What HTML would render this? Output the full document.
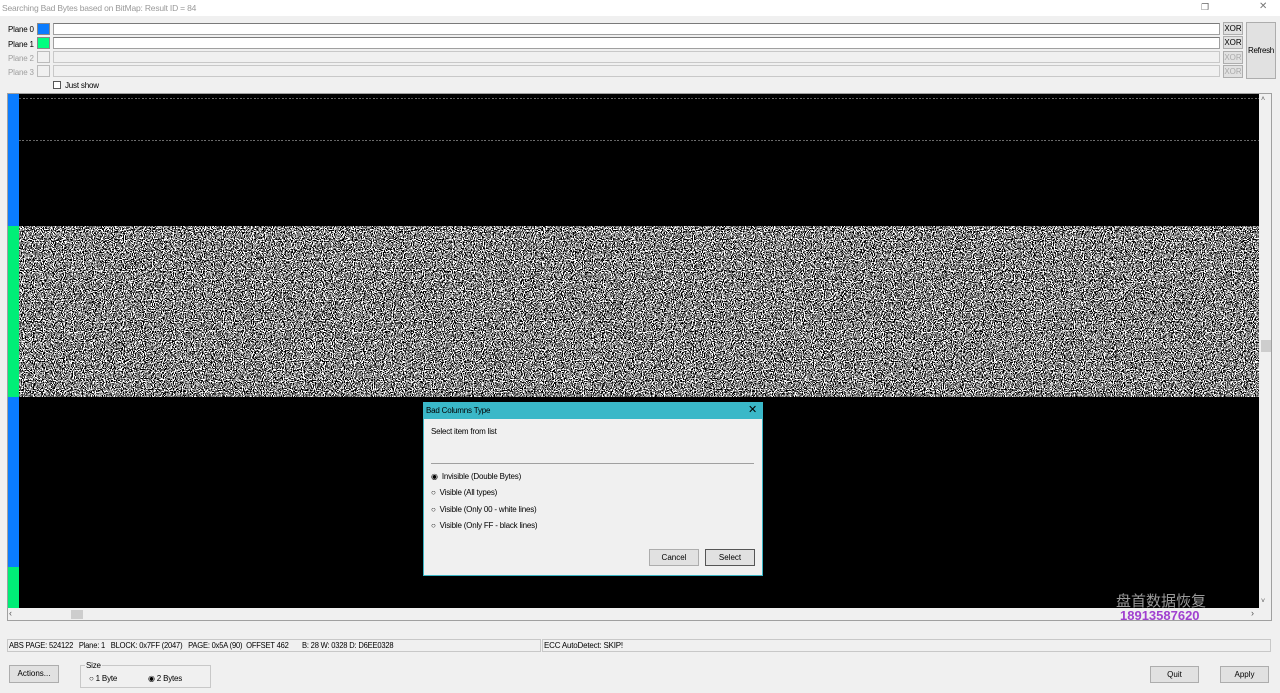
<!DOCTYPE html>
<html><head><meta charset="utf-8"><style>
*{box-sizing:border-box;margin:0;padding:0}
body{width:1280px;height:693px;background:#f0f0f0;font-family:"Liberation Sans",sans-serif;font-size:8px;color:#000;position:relative;overflow:hidden}
.a{position:absolute}
.lbl{font-size:8px;letter-spacing:-0.2px}
.in{background:#fff;border:1px solid #a0a0a0;border-top-color:#7a7a7a}
.dis{background:#f0f0f0;border:1px solid #c8c8c8}
.btn{background:#e1e1e1;border:1px solid #adadad;text-align:center;font-size:8px}
.xor{background:#e1e1e1;border:1px solid #adadad;font-size:8px;text-align:center;line-height:11px}
</style></head><body>
<div class="a" style="left:0;top:0;width:1280px;height:16px;background:#fff"></div>
<div class="a" style="left:2px;top:3px;color:#9a9a9a;font-size:8.5px;letter-spacing:-0.2px">Searching Bad Bytes based on BitMap: Result ID = 84</div>
<div class="a" style="left:1201px;top:2px;color:#666;font-size:9px">❐</div>
<div class="a" style="left:1259px;top:1px;color:#777;font-size:10px">✕</div>

<div class="a lbl" style="left:8px;top:25px">Plane 0</div>
<div class="a lbl" style="left:8px;top:40px">Plane 1</div>
<div class="a lbl" style="left:8px;top:54px;color:#a0a0a0">Plane 2</div>
<div class="a lbl" style="left:8px;top:68px;color:#a0a0a0">Plane 3</div>
<div class="a" style="left:37px;top:23px;width:13px;height:12px;background:#0a7cff;border:1px solid #888"></div>
<div class="a" style="left:37px;top:37px;width:13px;height:12px;background:#00ff7f;border:1px solid #888"></div>
<div class="a" style="left:37px;top:51px;width:13px;height:12px;border:1px solid #bbb"></div>
<div class="a" style="left:37px;top:65px;width:13px;height:12px;border:1px solid #bbb"></div>
<div class="a in" style="left:53px;top:23px;width:1167px;height:12px"></div>
<div class="a in" style="left:53px;top:37px;width:1167px;height:12px"></div>
<div class="a dis" style="left:53px;top:51px;width:1167px;height:12px"></div>
<div class="a dis" style="left:53px;top:65px;width:1167px;height:12px"></div>
<div class="a xor" style="left:1223px;top:22px;width:20px;height:13px">XOR</div>
<div class="a xor" style="left:1223px;top:36px;width:20px;height:13px">XOR</div>
<div class="a xor" style="left:1223px;top:51px;width:20px;height:13px;color:#aaa">XOR</div>
<div class="a xor" style="left:1223px;top:65px;width:20px;height:13px;color:#aaa">XOR</div>
<div class="a btn" style="left:1246px;top:22px;width:30px;height:57px;line-height:55px;letter-spacing:-0.3px">Refresh</div>
<div class="a" style="left:53px;top:81px;width:8px;height:8px;background:#fff;border:1px solid #555"></div>
<div class="a lbl" style="left:65px;top:81px">Just show</div>

<div class="a" style="left:7px;top:93px;width:1265px;height:528px;border:1px solid #a0a0a0;background:#f0f0f0"></div>
<div class="a" style="left:8px;top:94px;width:11px;height:132px;background:#0a7cff"></div>
<div class="a" style="left:8px;top:226px;width:11px;height:171px;background:#00ee77"></div>
<div class="a" style="left:8px;top:397px;width:11px;height:170px;background:#0a7cff"></div>
<div class="a" style="left:8px;top:567px;width:11px;height:41px;background:#00ee77"></div>
<div class="a" style="left:19px;top:94px;width:1240px;height:514px;background:#000"></div>
<div class="a" style="left:19px;top:98px;width:1240px;height:1px;opacity:.6;background:repeating-linear-gradient(90deg,#888 0 2px,#000 2px 4px,#bbb 4px 6px,#000 6px 7px)"></div>
<div class="a" style="left:19px;top:140px;width:1240px;height:1px;opacity:.6;background:repeating-linear-gradient(90deg,#999 0 2px,#000 2px 3px,#bbb 3px 5px,#000 5px 7px)"></div>
<svg class="a" style="left:19px;top:226px" width="1240" height="171">
<filter id="n" x="0" y="0" width="100%" height="100%"><feTurbulence type="fractalNoise" baseFrequency="0.9" numOctaves="1" seed="3"/><feColorMatrix type="matrix" values="0 0 0 0 0  0 0 0 0 0  0 0 0 0 0  1 0 0 0 0"/><feComponentTransfer><feFuncA type="discrete" tableValues="0 1"/></feComponentTransfer><feColorMatrix type="matrix" values="0 0 0 0 1  0 0 0 0 1  0 0 0 0 1  0 0 0 1 0"/></filter>
<rect width="1240" height="171" fill="#000"/><rect width="1240" height="171" filter="url(#n)"/></svg>
<div class="a" style="left:1259px;top:94px;width:12px;height:514px;background:#f0f0f0"></div>
<div class="a" style="left:1261px;top:96px;font-size:7px;color:#555">˄</div>
<div class="a" style="left:1261px;top:340px;width:10px;height:12px;background:#cdcdcd"></div>
<div class="a" style="left:1261px;top:598px;font-size:7px;color:#555">˅</div>
<div class="a" style="left:9px;top:608px;font-size:9px;color:#555">‹</div>
<div class="a" style="left:71px;top:610px;width:12px;height:9px;background:#cdcdcd"></div>
<div class="a" style="left:1251px;top:608px;font-size:9px;color:#555">›</div>
<div class="a" style="left:1116px;top:590px;font-size:15px;color:#9a9a9a;font-family:'Liberation Sans','Noto Sans CJK SC',sans-serif">盘首数据恢复</div>
<div class="a" style="left:1120px;top:608px;font-size:13px;font-weight:bold;color:#a040d0">18913587620</div>

<!-- dialog -->
<div class="a" style="left:423px;top:402px;width:340px;height:174px;background:#f0f0f0;border:1px solid #3ab4c4"></div>
<div class="a" style="left:423px;top:402px;width:340px;height:17px;background:#3ab8c8"></div>
<div class="a lbl" style="left:426px;top:406px">Bad Columns Type</div>
<div class="a" style="left:748px;top:403px;font-size:11px">✕</div>
<div class="a lbl" style="left:431px;top:427px">Select item from list</div>
<div class="a" style="left:431px;top:463px;width:323px;height:1px;background:#a0a0a0"></div>
<div class="a lbl" style="left:431px;top:472px">◉&nbsp; Invisible (Double Bytes)</div>
<div class="a lbl" style="left:431px;top:488px">○&nbsp; Visible (All types)</div>
<div class="a lbl" style="left:431px;top:505px">○&nbsp; Visible (Only 00 - white lines)</div>
<div class="a lbl" style="left:431px;top:521px">○&nbsp; Visible (Only FF - black lines)</div>
<div class="a btn" style="left:649px;top:549px;width:50px;height:17px;line-height:15px">Cancel</div>
<div class="a btn" style="left:705px;top:549px;width:50px;height:17px;line-height:15px;border-color:#555">Select</div>

<!-- status -->
<div class="a" style="left:7px;top:639px;width:534px;height:13px;border:1px solid #c8c8c8"></div>
<div class="a lbl" style="left:9px;top:641px;white-space:nowrap;transform:scaleX(0.945);transform-origin:0 0">ABS PAGE: 524122 &nbsp; Plane: 1 &nbsp; BLOCK: 0x7FF (2047) &nbsp; PAGE: 0x5A (90) &nbsp;OFFSET 462 &nbsp; &nbsp; &nbsp; B: 28 W: 0328 D: D6EE0328</div>
<div class="a" style="left:542px;top:639px;width:729px;height:13px;border:1px solid #c8c8c8"></div>
<div class="a lbl" style="left:544px;top:641px">ECC AutoDetect: SKIP!</div>
<div class="a btn" style="left:9px;top:665px;width:50px;height:18px;line-height:16px">Actions...</div>
<div class="a" style="left:80px;top:665px;width:131px;height:23px;border:1px solid #c8c8c8"></div>
<div class="a lbl" style="left:85px;top:661px;background:#f0f0f0;padding:0 1px">Size</div>
<div class="a lbl" style="left:89px;top:674px">○ 1 Byte</div>
<div class="a lbl" style="left:148px;top:674px">◉ 2 Bytes</div>
<div class="a btn" style="left:1150px;top:666px;width:49px;height:17px;line-height:15px">Quit</div>
<div class="a btn" style="left:1220px;top:666px;width:49px;height:17px;line-height:15px">Apply</div>
</body></html>
